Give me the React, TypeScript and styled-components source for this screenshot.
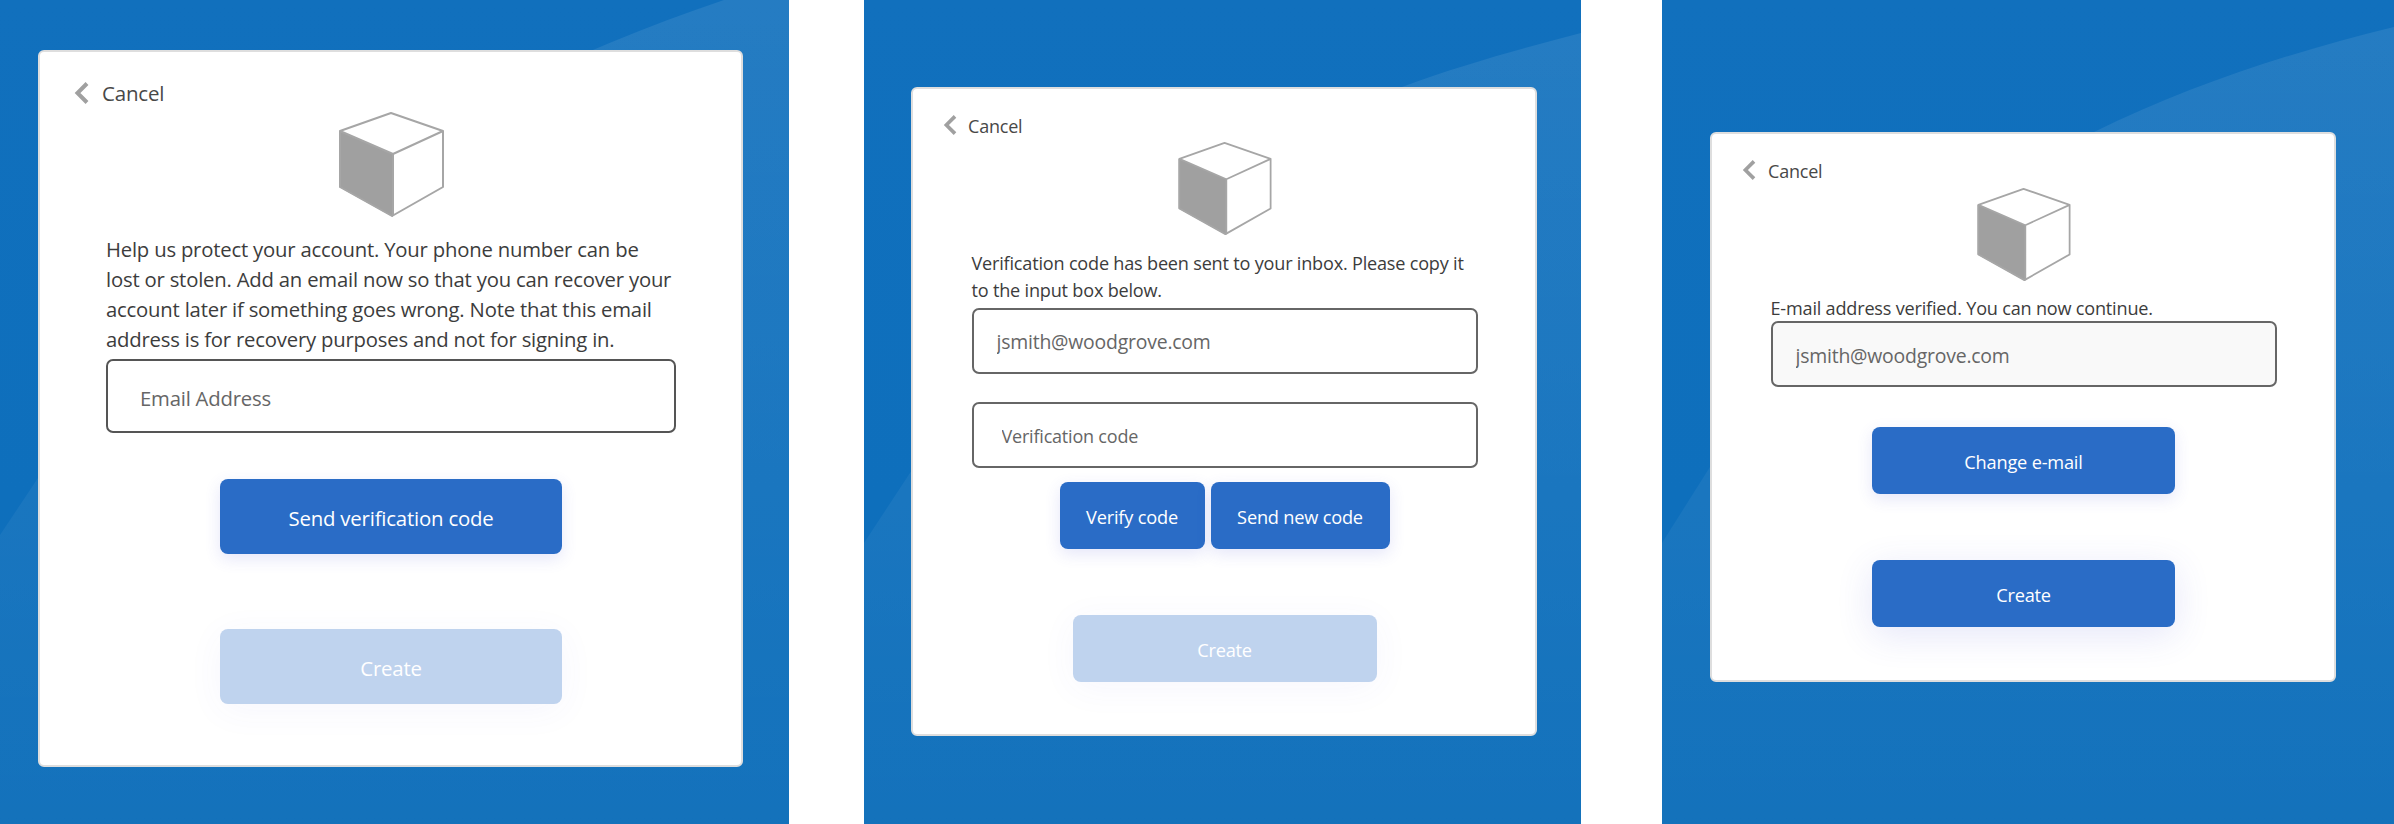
import React from 'react';
import styled, { createGlobalStyle } from 'styled-components';

type Size = 'lg' | 'md';

const GlobalStyle = createGlobalStyle`
  html, body {
    margin: 0;
    padding: 0;
    background: #fff;
  }
  body {
    font-family: "Open Sans", "Noto Sans", "Liberation Sans", sans-serif;
  }
`;

const BackChevron: React.FC<{ size: Size }> = ({ size }) => (
  <ChevronIcon $size={size} viewBox="0 0 15 22" aria-hidden="true">
    <path d="M13 1.5 L3.5 11 L13 20.5" fill="none" stroke="#a0a0a0" strokeWidth="4" />
  </ChevronIcon>
);

const CubeLogo: React.FC<{ size: Size }> = ({ size }) => (
  <CubeIcon $size={size} viewBox="0 0 105 105" aria-hidden="true">
    <path d="M0 19 L54 42 V105 L0 75 Z" fill="#a0a0a0" />
    <path
      d="M1 19 L52 1 L104 19 V75 L53 104 L1 75 Z M1 19 L54 42 L104 19 M54 42 V104"
      fill="none"
      stroke="#a6a6a6"
      strokeWidth="2"
      strokeLinejoin="round"
    />
  </CubeIcon>
);

const Swoop: React.FC<{ d: string; id: string }> = ({ d, id }) => (
  <SwoopLayer preserveAspectRatio="none" aria-hidden="true">
    <defs>
      <linearGradient id={id} x1="0" y1="0" x2="0" y2="1">
        <stop offset="0" stopColor="#fff" stopOpacity="0.085" />
        <stop offset="0.45" stopColor="#fff" stopOpacity="0.06" />
        <stop offset="1" stopColor="#fff" stopOpacity="0.02" />
      </linearGradient>
    </defs>
    <path d={d} fill={`url(#${id})`} />
  </SwoopLayer>
);

const CancelLink: React.FC<{ size: Size; $top: number; $left: number; gap: number }> = ({
  size,
  $top,
  $left,
  gap,
}) => (
  <BackRow $size={size} $top={$top} $left={$left} $gap={gap}>
    <BackChevron size={size} />
    <BackLabel $size={size}>Cancel</BackLabel>
  </BackRow>
);

export default function App() {
  return (
    <Page>
      <GlobalStyle />

      <Panel $width={789} $left={38} $top={50}>
        <Swoop
          id="swoop-a"
          d="M0 535 L38 478 C170 280 400 110 724 0 L789 0 L789 824 L0 824 Z"
        />
        <Card $width={705} $height={717}>
          <CancelLink size="lg" $top={30} $left={34} gap={13} />
          <Body>
            <CubeSlot $top={8}>
              <CubeLogo size="lg" />
            </CubeSlot>
            <Message $size="lg" $top={17} $gapBelow={5} $width={570}>
              Help us protect your account. Your phone number can be
              <br />
              lost or stolen. Add an email now so that you can recover your
              <br />
              account later if something goes wrong. Note that this email
              <br />
              address is for recovery purposes and not for signing in.
            </Message>
            <Field $size="lg" $inset={34} $textSize={20.3} $nudge={4} placeholder="Email Address" />
            <ActionButton $size="lg" $width={342} $top={46}>
              Send verification code
            </ActionButton>
            <ActionButton $size="lg" $width={342} $top={75} $faded disabled>
              Create
            </ActionButton>
          </Body>
        </Card>
      </Panel>

      <Gutter $width={75} />

      <Panel $width={717} $left={47} $top={87}>
        <Swoop
          id="swoop-b"
          d="M0 543 L46 473 C170 300 340 160 538 87 C600 64 660 48 717 33 L717 824 L0 824 Z"
        />
        <Card $width={626} $height={649}>
          <CancelLink size="md" $top={26} $left={30} gap={11} />
          <Body>
            <CubeSlot $top={7}>
              <CubeLogo size="md" />
            </CubeSlot>
            <Message $size="md" $top={15} $gapBelow={4} $width={506}>
              Verification code has been sent to your inbox. Please copy it
              <br />
              to the input box below.
            </Message>
            <Field $size="md" $inset={25} $textSize={19.4} readOnly value="jsmith@woodgrove.com" />
            <Field
              $size="md"
              $inset={30}
              $textSize={18}
              $nudge={2}
              $top={28}
              placeholder="Verification code"
            />
            <ButtonRow>
              <ActionButton $size="md" $width={145}>
                Verify code
              </ActionButton>
              <ActionButton $size="md" $width={179}>
                Send new code
              </ActionButton>
            </ButtonRow>
            <ActionButton $size="md" $width={304} $top={66} $faded disabled>
              Create
            </ActionButton>
          </Body>
        </Card>
      </Panel>

      <Gutter $width={81} />

      <Panel $width={732} $left={48} $top={132}>
        <Swoop
          id="swoop-c"
          d="M0 543 L48 467 C150 320 280 210 432 132 C530 84 630 52 732 27 L732 824 L0 824 Z"
        />
        <Card $width={626} $height={550}>
          <CancelLink size="md" $top={26} $left={30} gap={12} />
          <Body>
            <CubeSlot $top={8}>
              <CubeLogo size="md" />
            </CubeSlot>
            <Message $size="md" $top={15} $gapBelow={0} $width={506} $tight>
              E-mail address verified. You can now continue.
            </Message>
            <Field
              $size="md"
              $inset={25}
              $textSize={19.4}
              $nudge={2}
              $muted
              readOnly
              value="jsmith@woodgrove.com"
            />
            <ActionButton $size="md" $width={303} $top={40}>
              Change e-mail
            </ActionButton>
            <ActionButton $size="md" $width={303} $top={66} $glow>
              Create
            </ActionButton>
          </Body>
        </Card>
      </Panel>
    </Page>
  );
}

// Styling
const Page = styled.div`
  display: flex;
  width: 2394px;
  height: 824px;
  overflow: hidden;
  background: #fff;
`;

const Gutter = styled.div<{ $width: number }>`
  flex: 0 0 ${(p) => p.$width}px;
`;

const Panel = styled.section<{ $width: number; $left: number; $top: number }>`
  position: relative;
  flex: 0 0 ${(p) => p.$width}px;
  box-sizing: border-box;
  height: 824px;
  padding: ${(p) => p.$top}px 0 0 ${(p) => p.$left}px;
  background: linear-gradient(180deg, #1170bd 0%, #0e6fbc 60%, #0f6fba 100%);
`;

const SwoopLayer = styled.svg`
  position: absolute;
  inset: 0;
  width: 100%;
  height: 100%;
`;

const Card = styled.div<{ $width: number; $height: number }>`
  position: relative;
  box-sizing: border-box;
  width: ${(p) => p.$width}px;
  height: ${(p) => p.$height}px;
  background: #fff;
  border: 2px solid #dedede;
  border-radius: 6px;
`;

const BackRow = styled.div<{ $size: Size; $top: number; $left: number; $gap: number }>`
  display: flex;
  align-items: center;
  gap: ${(p) => p.$gap}px;
  height: ${(p) => (p.$size === 'lg' ? 22 : 20)}px;
  margin: ${(p) => p.$top}px 0 0 ${(p) => p.$left}px;
`;

const ChevronIcon = styled.svg<{ $size: Size }>`
  display: block;
  flex: none;
  width: ${(p) => (p.$size === 'lg' ? 15 : 14)}px;
  height: ${(p) => (p.$size === 'lg' ? 22 : 20)}px;
`;

const BackLabel = styled.span<{ $size: Size }>`
  padding-top: 1px;
  font-size: ${(p) => (p.$size === 'lg' ? 20.5 : 18)}px;
  letter-spacing: -0.2px;
  line-height: 1;
  color: #484848;
`;

const Body = styled.div`
  display: flex;
  flex-direction: column;
  align-items: center;
  padding-left: 1px;
`;

const CubeSlot = styled.div<{ $top: number }>`
  margin-top: ${(p) => p.$top}px;
`;

const CubeIcon = styled.svg<{ $size: Size }>`
  display: block;
  width: ${(p) => (p.$size === 'lg' ? 105 : 94)}px;
  height: ${(p) => (p.$size === 'lg' ? 105 : 93)}px;
`;

const Message = styled.p<{
  $size: Size;
  $top: number;
  $gapBelow: number;
  $width: number;
  $tight?: boolean;
}>`
  box-sizing: border-box;
  width: ${(p) => p.$width}px;
  margin: ${(p) => p.$top}px 0 ${(p) => p.$gapBelow}px;
  font-size: ${(p) => (p.$size === 'lg' ? 20.3 : 18.1)}px;
  letter-spacing: -0.2px;
  line-height: ${(p) => (p.$tight ? 25 : p.$size === 'lg' ? 30 : 27)}px;
  white-space: nowrap;
  color: #3c3c3c;
`;

const Field = styled.input<{
  $size: Size;
  $inset: number;
  $textSize: number;
  $nudge?: number;
  $top?: number;
  $muted?: boolean;
}>`
  box-sizing: border-box;
  display: block;
  flex: none;
  width: ${(p) => (p.$size === 'lg' ? 570 : 506)}px;
  height: ${(p) => (p.$size === 'lg' ? 74 : 66)}px;
  margin-top: ${(p) => p.$top ?? 0}px;
  padding: ${(p) => p.$nudge ?? 0}px 0 0 ${(p) => p.$inset - 2}px;
  border: 2px solid ${(p) => (p.$size === 'lg' ? '#555' : '#666')};
  border-radius: 7px;
  outline: none;
  background: ${(p) => (p.$muted ? '#f9f9f9' : '#fff')};
  font-family: inherit;
  font-size: ${(p) => p.$textSize}px;
  letter-spacing: -0.2px;
  color: #666;

  &::placeholder {
    color: #666;
    opacity: 1;
  }
`;

const ButtonRow = styled.div`
  display: flex;
  gap: 6px;
  margin-top: 14px;
`;

const ActionButton = styled.button<{
  $size: Size;
  $width: number;
  $top?: number;
  $faded?: boolean;
  $glow?: boolean;
}>`
  display: block;
  flex: none;
  box-sizing: border-box;
  width: ${(p) => p.$width}px;
  height: ${(p) => (p.$size === 'lg' ? 75 : 67)}px;
  margin-top: ${(p) => p.$top ?? 0}px;
  padding: 3px 0 0;
  border: none;
  border-radius: 8px;
  background: ${(p) => (p.$faded ? '#bfd3ee' : '#2a6cc6')};
  box-shadow: ${(p) =>
    p.$faded
      ? '0 6px 36px rgba(70, 80, 210, 0.05)'
      : p.$glow
        ? '0 8px 36px rgba(70, 80, 210, 0.14)'
        : '0 5px 16px rgba(70, 80, 210, 0.14)'};
  font-family: inherit;
  font-size: ${(p) => (p.$size === 'lg' ? 20.4 : 18.2)}px;
  letter-spacing: -0.2px;
  color: #fff;
`;
